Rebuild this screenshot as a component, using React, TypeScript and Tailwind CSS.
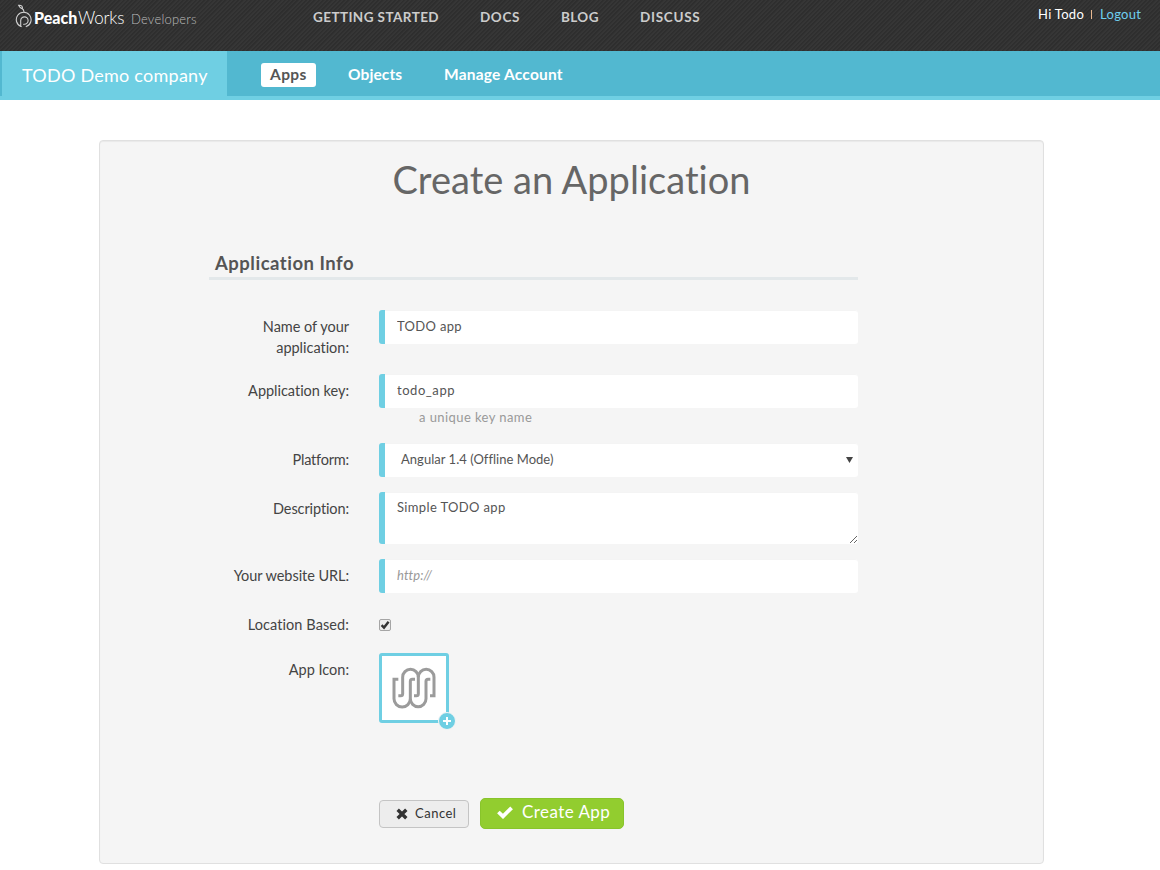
import type { ReactNode } from 'react';

const topLinks = [
  { label: 'GETTING STARTED', style: 'w-[167px] tracking-[0.42px]' },
  { label: 'DOCS', style: 'w-[81px] tracking-[0.6px]' },
  { label: 'BLOG', style: 'w-[79px] tracking-[0.4px]' },
  { label: 'DISCUSS', style: 'w-[61px] tracking-[0.7px]' },
];

const fieldBase =
  'w-full rounded-[3px] border-0 border-l-[6px] border-[#6fcfe3] bg-white pl-3 text-[13px] text-[#555] shadow-[inset_0_1px_0_#f4f4f4] outline-none';
const field = `block ${fieldBase}`;

function Row({
  label,
  height,
  tracking = 'tracking-[-0.02px]',
  children,
}: {
  label: string;
  height: string;
  tracking?: string;
  children: ReactNode;
}) {
  return (
    <div className={`flex gap-[30px] ${height}`}>
      <label
        className={`w-[140px] shrink-0 pt-[6px] pl-6 text-right text-[14.5px] leading-[21px] text-[#444] ${tracking}`}
      >
        {label}
      </label>
      <div className="w-[479px]">{children}</div>
    </div>
  );
}

function PeachLogo() {
  return (
    <svg width="18" height="24" viewBox="0 0 18 24" fill="none" stroke="#d0d0d0" strokeWidth="1.1" strokeLinecap="round">
      <path d="M6.2 22.6A7.4 7.4 0 1 1 11.2 22.6" />
      <path d="M5.7 22.3V16.6A3.7 3.7 0 1 1 9.4 20.3H8.6" />
      <path d="M9 8C9 6 8.2 5.2 7 4.6C5.2 4.2 4.4 2.8 3.6 1.2C6 1 8 2.2 7.4 4.6" />
    </svg>
  );
}

function AppGlyph() {
  return (
    <svg width="46" height="42" viewBox="32 51.5 138 126" fill="none" stroke="#9b9b9b" strokeWidth="9">
      <path d="M54 88H41V147A24.5 24.5 0 0 0 90 147V94Q90 88 96 88H104" />
      <path d="M54 138H61Q67 138 67 132V82A23.5 23.5 0 0 1 114 82V132Q114 138 108 138H101" />
      <path d="M90 147A23.5 23.5 0 0 0 137 147V94Q137 88 143 88H150" />
      <path d="M114 82A23.5 23.5 0 0 1 161 82V138H149" />
    </svg>
  );
}

export default function App() {
  return (
    <div className="h-[870px] w-[1160px] overflow-hidden bg-white font-['Lato',sans-serif]">
      <header className="flex h-[51px] bg-[#323232] bg-[repeating-linear-gradient(135deg,#2e2e2e_0px,#2e2e2e_1px,#363636_2px,#363636_3px)]">
        <div className="flex w-[313px] items-start pt-[4px] pl-[15px]">
          <PeachLogo />
          <div className="mt-[2px] ml-[1px] flex h-6 items-baseline whitespace-nowrap leading-6 text-white">
            <span className="w-[44px] text-[16px] font-black">Peach</span>
            <span className="w-[53px] text-[17px] font-light tracking-[-0.2px]">Works</span>
            <span className="text-[13px] font-light tracking-[0.2px] text-[#bbb]">Developers</span>
          </div>
        </div>
        <nav className="flex w-[725px] pt-[7px] text-[13.5px] leading-5 font-bold text-[#ccc]">
          {topLinks.map((l) => (
            <a key={l.label} className={`whitespace-nowrap ${l.style}`}>
              {l.label}
            </a>
          ))}
        </nav>
        <div className="flex pt-1 text-[13px] leading-5 tracking-[0.3px] whitespace-nowrap">
          <span className="w-[53px] text-white">Hi Todo</span>
          <span className="mt-[6px] mr-[8px] h-[9px] w-px bg-[#e8b890]" />
          <a className="text-[#6fcfee]">Logout</a>
        </div>
      </header>

      <div className="flex h-[49px] border-b-4 border-[#6fcfe3] bg-[#52b8d0] pl-[2px]">
        <div className="w-[225px] bg-[#6fcfe3] pl-5 text-[18px] leading-[49px] tracking-[0.25px] whitespace-nowrap text-white">
          TODO Demo company
        </div>
        <nav className="flex items-start pt-3 pl-[34px] text-[15.5px] leading-[23px] font-bold tracking-[0.22px] whitespace-nowrap text-white">
          <a className="h-6 w-[55px] rounded-[3px] bg-white pl-[9px] tracking-[0.4px] text-[#555]">Apps</a>
          <a className="ml-8 w-24 tracking-[0.1px]">Objects</a>
          <a>Manage Account</a>
        </nav>
      </div>

      <main className="mt-10 ml-[99px] h-[724px] w-[945px] rounded-[4px] border border-[#e0e0e0] bg-[#f5f5f5] shadow-[inset_0_1px_1px_rgba(0,0,0,0.05)]">
        <h1 className="pt-[14px] text-center text-[38px] leading-[48px] tracking-[0.02px] text-[#666]">
          Create an Application
        </h1>
        <section className="mt-[48px] ml-[109px] w-[649px]">
          <h2 className="h-[29px] border-b-[3px] border-[#e3e8ea] pl-[6px] text-[18.5px] leading-[25px] font-bold tracking-[0.5px] text-[#555]">
            Application Info
          </h2>
          <form className="pt-[30px]">
            <Row label="Name of your application:" height="h-[64px]">
              <input className={`h-[34px] pb-[2px] tracking-[0.32px] ${field}`} defaultValue="TODO app" />
            </Row>
            <Row label="Application key:" height="h-[69px]">
              <input className={`h-[34px] pb-[2px] tracking-[0.55px] ${field}`} defaultValue="todo_app" />
              <p className="pl-10 text-[13px] leading-[19px] tracking-[0.42px] text-[#999]">a unique key name</p>
            </Row>
            <Row label="Platform:" height="h-[49px]" tracking="tracking-[-0.2px]">
              <div className={`flex h-[34px] items-center justify-between pr-[5px] tracking-[0.03px] ${fieldBase}`}>
                <span className="pl-1">Angular 1.4 (Offline Mode)</span>
                <svg width="7" height="6" viewBox="0 0 7 6" fill="#444">
                  <path d="M0 0H7L3.5 6Z" />
                </svg>
              </div>
            </Row>
            <Row label="Description:" height="h-[67px]" tracking="tracking-[-0.1px]">
              <textarea
                className={`h-[52px] resize pt-[5px] leading-5 tracking-[0.35px] ${field}`}
                defaultValue="Simple TODO app"
              />
            </Row>
            <Row label="Your website URL:" height="h-[49px]" tracking="tracking-[-0.06px]">
              <input
                className={`h-[34px] pb-[2px] tracking-[0.1px] placeholder:text-[#999] placeholder:italic ${field}`}
                placeholder="http://"
              />
            </Row>
            <Row label="Location Based:" height="h-[45px]" tracking="tracking-[0.09px]">
              <svg className="mt-[11px]" width="12" height="12" viewBox="0 0 12 12">
                <rect x="0.5" y="0.5" width="11" height="11" rx="1.5" fill="#ececec" stroke="#a5a5a5" />
                <path d="M2.6 6.2L5 8.6L9.6 2.8" fill="none" stroke="#333" strokeWidth="2.4" />
              </svg>
            </Row>
            <Row label="App Icon:" height="h-[145px]">
              <div className="relative flex h-[70px] w-[70px] items-center justify-center rounded-[3px] border-[3px] border-[#6fcfe3] bg-white">
                <AppGlyph />
                <span className="absolute -right-[10px] -bottom-[10px] flex h-[18px] w-[18px] items-center justify-center rounded-full border border-[#f5f5f5] bg-[#6fcfe3]">
                  <svg width="8" height="8" viewBox="0 0 8 8" stroke="#fff" strokeWidth="2">
                    <path d="M4 0V8M0 4H8" />
                  </svg>
                </span>
              </div>
            </Row>
            <div className="flex items-start gap-[11px] pl-[170px]">
              <button
                type="button"
                className="mt-[2px] flex h-7 w-[90px] items-center rounded-[4px] border border-[#c4c4c4] bg-[#ededed] pl-4 text-[13px] tracking-[0.5px] text-[#333]"
              >
                <svg className="mr-[7px]" width="12" height="12" viewBox="0 0 12 12" stroke="#333" strokeWidth="3.4">
                  <path d="M1.7 1.7L10.3 10.3M10.3 1.7L1.7 10.3" />
                </svg>
                Cancel
              </button>
              <button
                type="button"
                className="flex h-[31px] w-[144px] items-center rounded-[5px] border border-[#88c42b] bg-[#92cd2f] pb-[3px] pl-4 text-[17px] tracking-[0.45px] whitespace-nowrap text-white"
              >
                <svg className="mr-[9px]" width="16" height="13" viewBox="0 0 16 13" fill="none" stroke="#fff" strokeWidth="3.8">
                  <path d="M1.4 6L6 10.4L14.6 1.8" />
                </svg>
                Create App
              </button>
            </div>
          </form>
        </section>
      </main>
    </div>
  );
}
